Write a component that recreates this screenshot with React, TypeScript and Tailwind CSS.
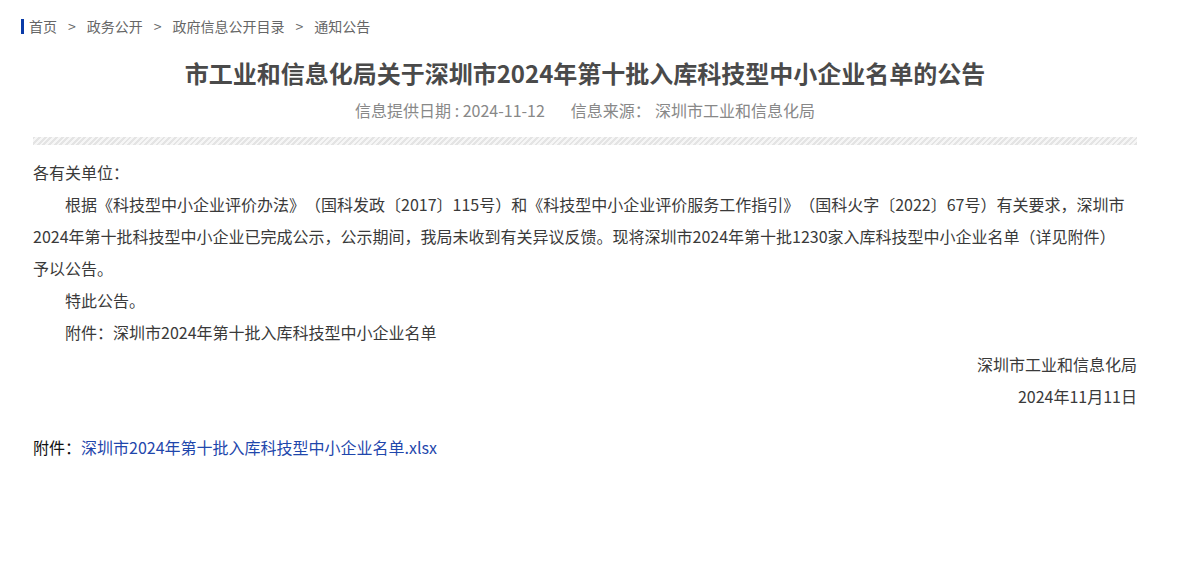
import React from "react";

const font = { fontFamily: '"Noto Sans CJK SC", "Noto Sans", sans-serif' };

export default function App() {
  return (
    <div className="min-h-[561px] w-full bg-white text-[#333] [text-spacing-trim:space-all]" style={font}>
      <div className="pt-[19px] pl-[21px]">
        <div className="flex h-[15px] items-center border-l-[3px] border-[#0a3ba8] pl-[5px] text-[14px] leading-[15px] text-[#666]">
          <span>首页</span>
          <span className="px-[11px]">&gt;</span>
          <span>政务公开</span>
          <span className="px-[11px]">&gt;</span>
          <span>政府信息公开目录</span>
          <span className="px-[11px]">&gt;</span>
          <span>通知公告</span>
        </div>
      </div>

      <div className="ml-[33px] w-[1104px]">
        <h1 className="mt-[21px] text-center text-[24px] font-bold leading-[36px] text-[#4a4a4a]">
          市工业和信息化局关于深圳市2024年第十批入库科技型中小企业名单的公告
        </h1>
        <div className="mt-[7px] flex justify-center text-[16px] leading-[24px] text-[#888]">
          <span>信息提供日期 : 2024-11-12</span>
          <span className="ml-[26px]">信息来源：</span>
          <span className="ml-[4px]">深圳市工业和信息化局</span>
        </div>
        <div className="mt-[15px] h-[8px] w-full bg-[repeating-linear-gradient(135deg,#e4e4e4_0px,#e4e4e4_2px,#f6f6f6_2px,#f6f6f6_4px)]" />

        <div className="mt-[11px] text-[16px] leading-[32px] text-[#3a3a3a]">
          <p>各有关单位：</p>
          <p className="indent-[32px]">
            根据《科技型中小企业评价办法》（国科发政〔2017〕115号）和《科技型中小企业评价服务工作指引》（国科火字〔2022〕67号）有关要求，深圳市2024年第十批科技型中小企业已完成公示，公示期间，我局未收到有关异议反馈。现将深圳市2024年第十批1230家入库科技型中小企业名单（详见附件）
            <br />
            予以公告。
          </p>
          <p className="indent-[32px]">特此公告。</p>
          <p className="indent-[32px]">附件：深圳市2024年第十批入库科技型中小企业名单</p>
          <p className="text-right">深圳市工业和信息化局</p>
          <p className="text-right">2024年11月11日</p>
          <p className="mt-[19px]">
            <span className="text-[#111]">附件：</span>
            <a className="text-[#1f47ac]">深圳市2024年第十批入库科技型中小企业名单.xlsx</a>
          </p>
        </div>
      </div>
    </div>
  );
}
